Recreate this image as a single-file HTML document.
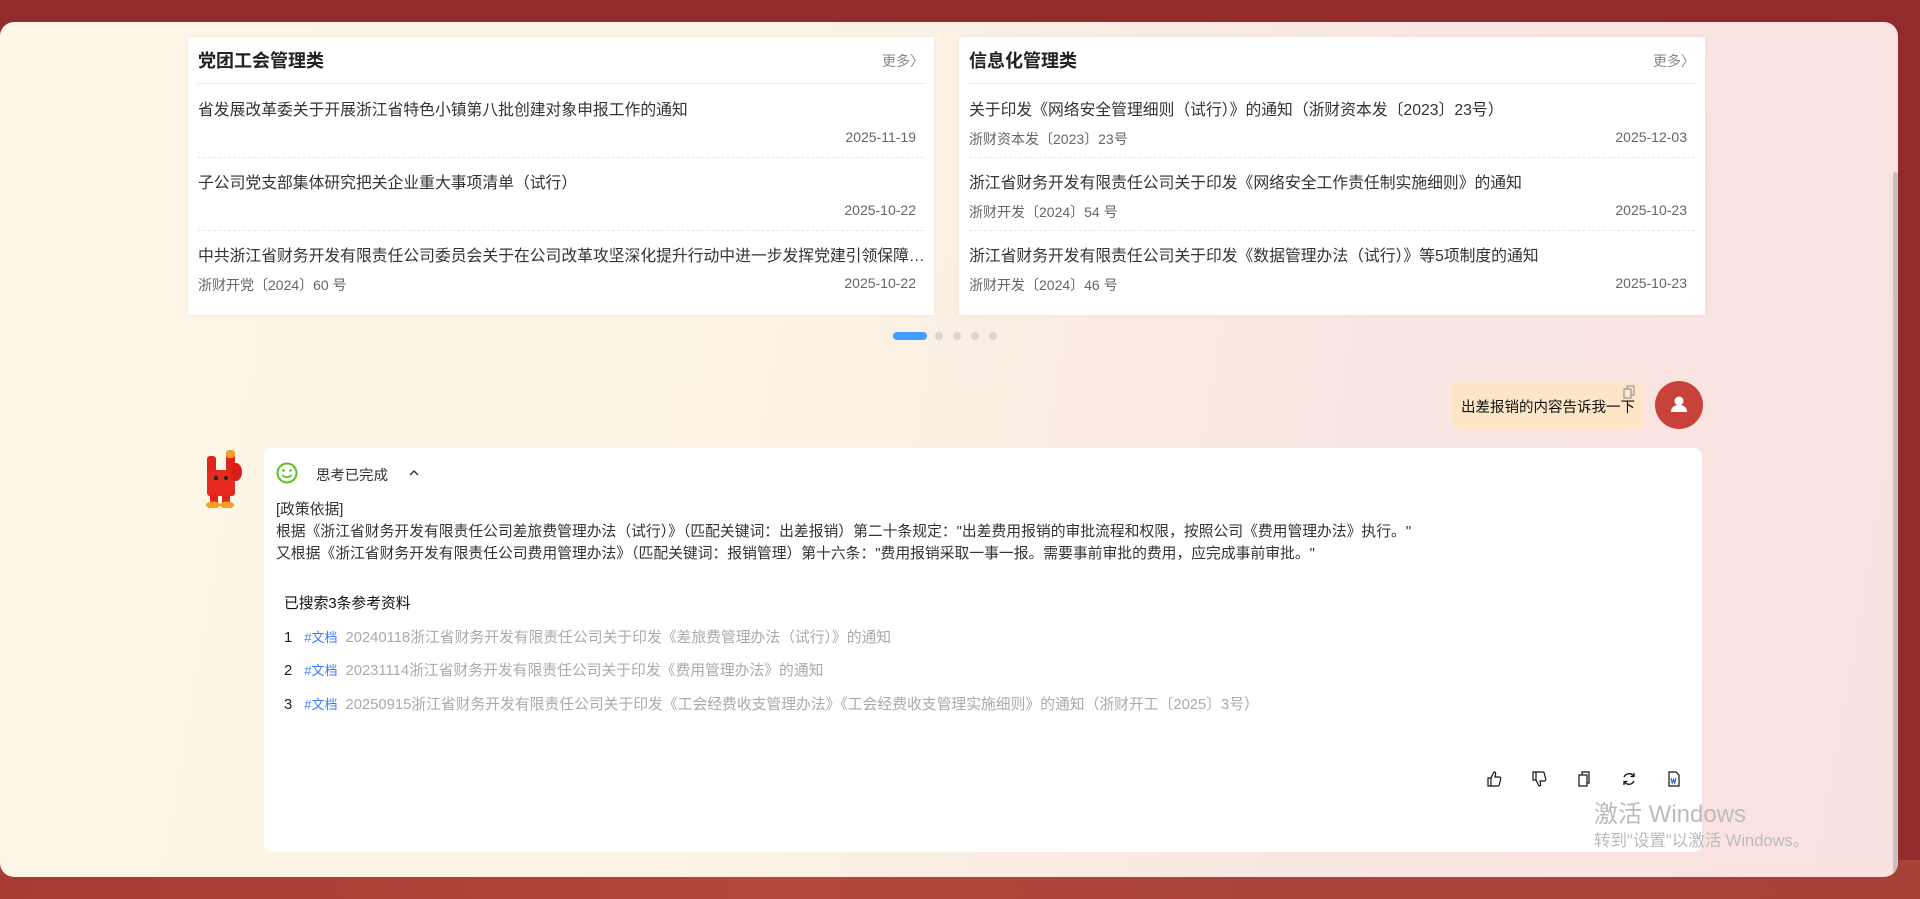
<!DOCTYPE html>
<html><head><meta charset="utf-8">
<style>
*{margin:0;padding:0;box-sizing:border-box}
body{width:1920px;height:899px;overflow:hidden;background:#922b2b;font-family:"Liberation Sans","Noto Sans CJK SC",sans-serif;position:relative;color:#333}
.bottom{position:absolute;left:0;top:860px;width:1920px;height:39px;background:linear-gradient(90deg,#a93a33,#b5463a 40%,#a8443a 70%,#a84236)}
.panel{position:absolute;left:0;top:22px;width:1898px;height:855px;border-radius:14px;overflow:hidden;
background:linear-gradient(100deg,#fdf7e7 0%,#fcf3e4 40%,#f8e6e2 70%,#fae2e2 100%)}
.sb{position:absolute;left:1893px;top:150px;width:5px;height:705px;background:#c9c0c0;border-radius:3px}
.card{position:absolute;top:15px;width:746px;height:278px;background:#fff;box-shadow:0 0 4px rgba(0,0,0,.06)}
.ct{position:absolute;left:10px;top:10px;font-size:18px;font-weight:bold;color:#222}
.more{position:absolute;right:10px;top:14px;font-size:14px;color:#888}
.hl{position:absolute;left:10px;right:10px;top:46px;border-top:1px solid #e8e8e8}
.it{position:absolute;left:10px;right:10px;height:63px}
.it .t{position:absolute;left:0;top:2px;font-size:15.8px;color:#333;white-space:nowrap;max-width:738px;overflow:hidden;text-overflow:ellipsis}
.it .s{position:absolute;left:0;top:34px;font-size:14px;color:#666}
.it .d{position:absolute;right:8px;top:34px;font-size:14px;color:#666}
.it.l{border-bottom:1px dashed #e6e6e6}
.dots{position:absolute;top:310px;left:893px;height:8px}
.dot{position:absolute;top:0;width:8px;height:8px;border-radius:4px;background:#d6d6d6}
.bubble{position:absolute;left:1451px;top:360px;width:192px;height:47px;background:#fde5c8;border-radius:8px;font-size:14.5px;color:#111;padding:14px 0 0 10px}
.av{position:absolute;left:1655px;top:359px;width:48px;height:48px;border-radius:50%;background:#c9423a}
.ans{position:absolute;left:264px;top:426px;width:1438px;height:404px;background:#fff;border-radius:8px}
.p{position:absolute;left:12px;font-size:14.8px;color:#333;white-space:nowrap}
.ref{position:absolute;left:20px;font-size:14.8px;white-space:nowrap;color:#222}
.ref b{font-weight:normal;color:#3a7bff;font-size:13px;margin-left:12px}
.ref i{font-style:normal;color:#aaa;margin-left:8px}
.ic{position:absolute}
.win{position:absolute;left:1594px;color:#bbb;white-space:nowrap}
</style></head><body>
<div class="bottom"></div>
<div class="panel">
 <div class="sb"></div>
 <div class="card" style="left:188px">
  <div class="ct">党团工会管理类</div><div class="more">更多〉</div><div class="hl"></div>
  <div class="it l" style="top:58px"><div class="t">省发展改革委关于开展浙江省特色小镇第八批创建对象申报工作的通知</div><div class="d">2025-11-19</div></div>
  <div class="it l" style="top:131px"><div class="t">子公司党支部集体研究把关企业重大事项清单（试行）</div><div class="d">2025-10-22</div></div>
  <div class="it" style="top:204px"><div class="t">中共浙江省财务开发有限责任公司委员会关于在公司改革攻坚深化提升行动中进一步发挥党建引领保障作用的实施意见</div><div class="s">浙财开党〔2024〕60 号</div><div class="d">2025-10-22</div></div>
 </div>
 <div class="card" style="left:959px">
  <div class="ct">信息化管理类</div><div class="more">更多〉</div><div class="hl"></div>
  <div class="it l" style="top:58px"><div class="t">关于印发《网络安全管理细则（试行）》的通知（浙财资本发〔2023〕23号）</div><div class="s">浙财资本发〔2023〕23号</div><div class="d">2025-12-03</div></div>
  <div class="it l" style="top:131px"><div class="t">浙江省财务开发有限责任公司关于印发《网络安全工作责任制实施细则》的通知</div><div class="s">浙财开发〔2024〕54 号</div><div class="d">2025-10-23</div></div>
  <div class="it" style="top:204px"><div class="t">浙江省财务开发有限责任公司关于印发《数据管理办法（试行）》等5项制度的通知</div><div class="s">浙财开发〔2024〕46 号</div><div class="d">2025-10-23</div></div>
 </div>
 <div class="dots">
  <div class="dot" style="left:0;width:34px;background:#409eff"></div>
  <div class="dot" style="left:42px"></div><div class="dot" style="left:60px"></div><div class="dot" style="left:78px"></div><div class="dot" style="left:96px"></div>
 </div>
 <div class="bubble">出差报销的内容告诉我一下
  <svg style="position:absolute;right:8px;top:3px" width="12" height="14" viewBox="0 0 12 14"><rect x="1" y="4" width="7" height="9" fill="none" stroke="#888"/><path d="M4 4V1h7v9H8" fill="none" stroke="#888"/></svg></div>
 <div class="av"><svg width="48" height="48" viewBox="0 0 48 48"><circle cx="24" cy="20" r="4.5" fill="#fff"/><path d="M16 31c0-5 3.5-7 8-7s8 2 8 7z" fill="#fff"/></svg></div>
 <svg style="position:absolute;left:202px;top:428px" width="42" height="58" viewBox="0 0 42 58">
  <rect x="5" y="6" width="9" height="40" rx="3" fill="#e0251c"/><rect x="24" y="2" width="9" height="44" rx="3" fill="#e0251c"/>
  <rect x="24" y="0" width="9" height="8" rx="3" fill="#f0a030"/>
  <rect x="5" y="20" width="28" height="26" rx="4" fill="#e42a1f"/><ellipse cx="34" cy="22" rx="6" ry="9" fill="#d82018"/>
  <circle cx="14" cy="28" r="2" fill="#222"/><circle cx="24" cy="28" r="2" fill="#222"/>
  <rect x="8" y="44" width="8" height="10" fill="#e0251c"/><rect x="20" y="44" width="8" height="10" fill="#e0251c"/>
  <ellipse cx="11" cy="55" rx="7" ry="3.5" fill="#f5a020"/><ellipse cx="25" cy="55" rx="7" ry="3.5" fill="#f5a020"/>
 </svg>
 <div class="ans">
  <svg style="position:absolute;left:12px;top:14px" width="22" height="22" viewBox="0 0 22 22"><circle cx="11" cy="11" r="9.5" fill="none" stroke="#52c41a" stroke-width="2"/><circle cx="7.5" cy="8.5" r="1.3" fill="#52c41a"/><circle cx="14.5" cy="8.5" r="1.3" fill="#52c41a"/><path d="M6.5 13c2.5 3 6.5 3 9 0" fill="none" stroke="#52c41a" stroke-width="1.8"/></svg>
  <div class="p" style="left:52px;top:16px;color:#333;font-size:14.4px">思考已完成</div>
  <svg style="position:absolute;left:144px;top:20px" width="12" height="10" viewBox="0 0 12 10"><path d="M2 7l4-4 4 4" fill="none" stroke="#333" stroke-width="1.4"/></svg>
  <div class="p" style="top:50px">[政策依据]</div>
  <div class="p" style="top:72px">根据《浙江省财务开发有限责任公司差旅费管理办法（试行）》（匹配关键词：出差报销）第二十条规定："出差费用报销的审批流程和权限，按照公司《费用管理办法》执行。"</div>
  <div class="p" style="top:94px">又根据《浙江省财务开发有限责任公司费用管理办法》（匹配关键词：报销管理）第十六条："费用报销采取一事一报。需要事前审批的费用，应完成事前审批。"</div>
  <div class="p" style="left:20px;top:144px;color:#111">已搜索3条参考资料</div>
  <div class="ref" style="top:178px">1<b>#文档</b><i>20240118浙江省财务开发有限责任公司关于印发《差旅费管理办法（试行）》的通知</i></div>
  <div class="ref" style="top:211px">2<b>#文档</b><i>20231114浙江省财务开发有限责任公司关于印发《费用管理办法》的通知</i></div>
  <div class="ref" style="top:245px">3<b>#文档</b><i>20250915浙江省财务开发有限责任公司关于印发《工会经费收支管理办法》《工会经费收支管理实施细则》的通知（浙财开工〔2025〕3号）</i></div>
  <svg class="ic" style="left:1222px;top:323px" width="16" height="16" viewBox="0 0 16 16"><path d="M2 7h3v8H2zM5 7l3-6c1.5 0 2 1 1.5 2.5L9 6h4.5c1 0 1.5 1 1.2 2l-1.5 6c-.2.7-.8 1-1.5 1H5" fill="none" stroke="#111" stroke-width="1.2"/></svg>
  <svg class="ic" style="left:1267px;top:323px" width="16" height="16" viewBox="0 0 16 16"><path d="M2 1h3v8H2zM5 9l3 6c1.5 0 2-1 1.5-2.5L9 10h4.5c1 0 1.5-1 1.2-2l-1.5-6c-.2-.7-.8-1-1.5-1H5" fill="none" stroke="#111" stroke-width="1.2"/></svg>
  <svg class="ic" style="left:1312px;top:323px" width="16" height="16" viewBox="0 0 16 16"><rect x="3" y="4" width="8" height="11" fill="none" stroke="#111" stroke-width="1.2"/><path d="M6 4V1h7v11h-2" fill="none" stroke="#111" stroke-width="1.2"/></svg>
  <svg class="ic" style="left:1357px;top:323px" width="16" height="16" viewBox="0 0 16 16"><path d="M12.5 5A5.5 5.5 0 0 0 3 6M3.5 11A5.5 5.5 0 0 0 13 10" fill="none" stroke="#111" stroke-width="1.3"/><path d="M13 2v3.5H9.5M3 14v-3.5h3.5" fill="none" stroke="#111" stroke-width="1.3"/></svg>
  <svg class="ic" style="left:1402px;top:323px" width="16" height="16" viewBox="0 0 16 16"><path d="M3 1h7l3 3v11H3z" fill="none" stroke="#111" stroke-width="1.2"/><path d="M5 7l1.2 5 1.3-3.5 1.3 3.5L10 7" fill="none" stroke="#1a5fd0" stroke-width="1.1"/></svg>
 </div>
 <div class="win" style="top:772px;font-size:24px">激活 Windows</div>
 <div class="win" style="top:805px;font-size:16.5px">转到"设置"以激活 Windows。</div>
</div>
</body></html>
